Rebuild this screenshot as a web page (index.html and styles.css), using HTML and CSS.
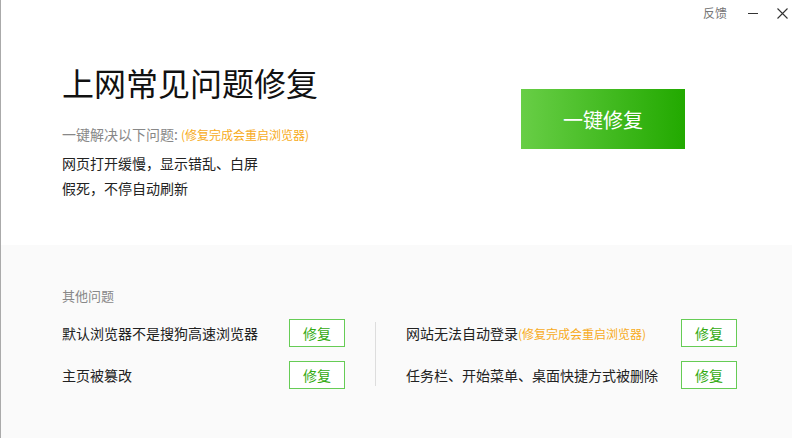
FILE: index.html
```html
<!DOCTYPE html>
<html lang="zh-CN">
<head>
    <meta charset="UTF-8">
    <title>上网常见问题修复</title>
    <link rel="stylesheet" href="styles.css">
</head>
<body>
<div class="window">
    <div class="top">
        <div class="titlebar">
            <span class="feedback">反馈</span>
            <span class="tb-btn">
                <svg width="10" height="10" viewBox="0 0 10 10"><path d="M0 5.5H10" stroke="#333" stroke-width="1"/></svg>
            </span>
            <span class="tb-btn">
                <svg width="11" height="11" viewBox="0 0 11 11"><path d="M0.5 0.5L10.5 10.5M10.5 0.5L0.5 10.5" stroke="#333" stroke-width="1.1"/></svg>
            </span>
        </div>
        <div class="hero">
            <div class="hero-text">
                <h1 class="title">上网常见问题修复</h1>
                <p class="sub">一键解决以下问题: <span class="warn">(修复完成会重启浏览器)</span></p>
                <p class="desc">网页打开缓慢，显示错乱、白屏<br>假死，不停自动刷新</p>
            </div>
            <button class="fix-all">一键修复</button>
        </div>
    </div>
    <div class="others">
        <p class="others-title">其他问题</p>
        <div class="others-body">
            <div class="col col-left">
                <div class="row">
                    <span>默认浏览器不是搜狗高速浏览器</span>
                    <button class="fix">修复</button>
                </div>
                <div class="row">
                    <span>主页被篡改</span>
                    <button class="fix">修复</button>
                </div>
            </div>
            <div class="divider"></div>
            <div class="col col-right">
                <div class="row">
                    <span>网站无法自动登录<span class="warn">(修复完成会重启浏览器)</span></span>
                    <button class="fix">修复</button>
                </div>
                <div class="row">
                    <span>任务栏、开始菜单、桌面快捷方式被删除</span>
                    <button class="fix">修复</button>
                </div>
            </div>
        </div>
    </div>
</div>
</body>
</html>
```

FILE: styles.css
```css
body {
    margin: 0;
    font-family: "Noto Sans CJK SC", "Noto Sans", sans-serif;
    color: #222;
}
p, h1 {
    margin: 0;
}
.window {
    width: 792px;
    height: 438px;
    box-sizing: border-box;
    border-left: 1px solid #aaa;
    display: flex;
    flex-direction: column;
}
.top {
    height: 245px;
    background: #fff;
}
.titlebar {
    height: 26px;
    display: flex;
    justify-content: flex-end;
    align-items: center;
}
.feedback {
    font-size: 12px;
    color: #777;
    line-height: 16px;
    margin-right: 21px;
}
.tb-btn {
    display: flex;
    align-items: center;
    margin-right: 19px;
}
.tb-btn:last-child {
    margin-right: 4px;
}
.hero {
    display: flex;
    padding: 36px 0 0 61px;
}
.hero-text {
    width: 459px;
}
.title {
    font-size: 32px;
    font-weight: normal;
    line-height: 40px;
    color: #111;
}
.sub {
    margin-top: 22px;
    font-size: 14px;
    line-height: 20px;
    color: #888;
}
.warn {
    color: #f7ab22;
    font-size: 12px;
}
.desc {
    margin-top: 6px;
    font-size: 14px;
    line-height: 25px;
    color: #222;
}
.fix-all {
    margin-top: 27px;
    width: 164px;
    height: 60px;
    border: none;
    background: linear-gradient(to right, #68ce46, #22a900);
    color: #fff;
    font-family: inherit;
    font-size: 20px;
    cursor: pointer;
}
.others {
    flex: 1;
    background: #fafafa;
    padding: 41px 0 0 61px;
}
.others-title {
    font-size: 13px;
    line-height: 20px;
    color: #888;
}
.others-body {
    display: flex;
    margin-top: 13px;
}
.col {
    display: flex;
    flex-direction: column;
    gap: 14px;
}
.col-left {
    width: 283px;
}
.col-right {
    width: 331px;
}
.row {
    height: 28px;
    display: flex;
    align-items: center;
    justify-content: space-between;
    font-size: 14px;
}
.divider {
    width: 1px;
    height: 64px;
    margin: 3px 30px 0;
    background: #ddd;
}
.fix {
    width: 56px;
    height: 28px;
    box-sizing: border-box;
    border: 1px solid #66cc55;
    background: #fff;
    color: #33aa11;
    font-family: inherit;
    font-size: 14px;
    padding: 0;
    cursor: pointer;
}
```
